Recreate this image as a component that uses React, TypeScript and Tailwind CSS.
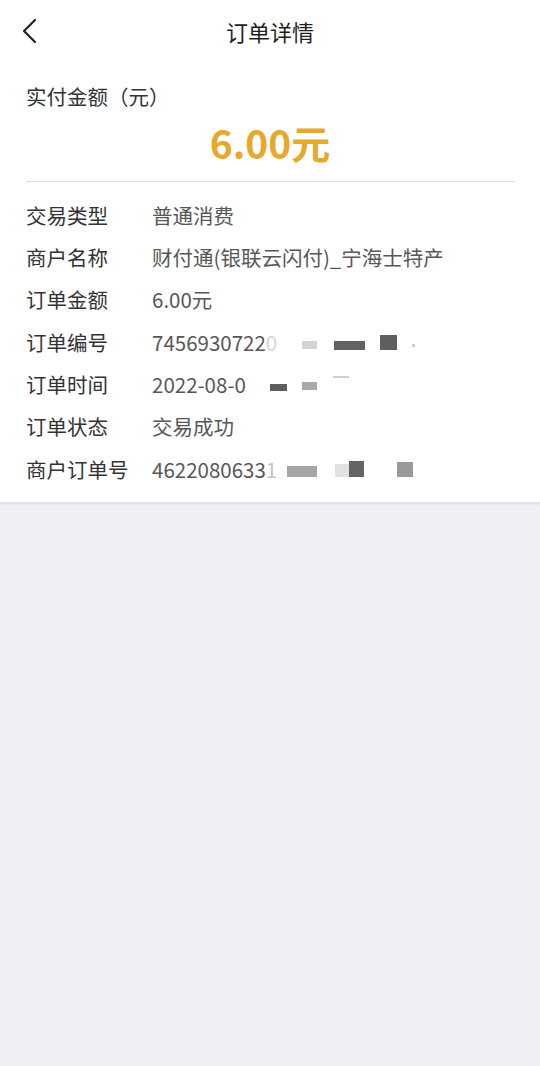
import React from "react";

const font = { fontFamily: '"Noto Sans CJK SC", "Noto Sans", sans-serif' };

function Row({ label, children }: { label: string; children: React.ReactNode }) {
  return (
    <div className="flex h-[42.33px] items-center text-[20.5px]">
      <div className="w-[126px] shrink-0 text-[#333333]">{label}</div>
      <div className="flex flex-1 items-center whitespace-nowrap text-[#575757]">{children}</div>
    </div>
  );
}

export default function App() {
  return (
    <div className="min-h-[1066px] w-[540px] bg-[#efeff4]" style={font}>
      <div className="border-b border-[#e4e4e8] bg-white shadow-[0_1px_2px_rgba(0,0,0,0.08)]">
        <div className="relative flex h-[62px] items-center justify-center">
          <svg
            className="absolute left-[20px] top-[18px]"
            width="20"
            height="26"
            viewBox="0 0 20 26"
            fill="none"
          >
            <path d="M15 2 L4 13 L15 24" stroke="#222" strokeWidth="2.2" strokeLinecap="round" strokeLinejoin="round" />
          </svg>
          <span className="text-[22px] text-[#1f1f1f]">订单详情</span>
        </div>
        <div className="px-[26px] pt-[21px]">
          <div className="text-[20.5px] leading-[26px] text-[#333333]">实付金额（元）</div>
          <div className="mt-[11px] text-center text-[39px] font-bold leading-[44px] text-[#e6a82d]">6.00元</div>
          <div className="mt-[17px] h-px w-[489px] bg-[#dcdcdc]" />
          <div className="pb-[12px] pt-[12px]">
            <Row label="交易类型">普通消费</Row>
            <Row label="商户名称">财付通(银联云闪付)_宁海士特产</Row>
            <Row label="订单金额">6.00元</Row>
            <Row label="订单编号">
              <span>7456930722</span>
              <span className="text-[#d6d6d6]">0</span>
              <span className="ml-[25px] h-[8px] w-[15px] translate-y-[3px] bg-[#d4d4d4]" />
              <span className="ml-[17px] h-[9px] w-[31px] translate-y-[3px] bg-[#626262]" />
              <span className="ml-[15px] h-[15px] w-[17px] bg-[#5e5e5e]" />
              <span className="ml-[15px] h-[3px] w-[3px] translate-y-[3px] bg-[#cfcfcf]" />
            </Row>
            <Row label="订单时间">
              <span>2022-08-0</span>
              <span className="ml-[24px] h-[7px] w-[17px] translate-y-[3px] bg-[#5e5e5e]" />
              <span className="ml-[15px] h-[8px] w-[15px] translate-y-[2px] bg-[#a8a8a8]" />
              <span className="ml-[16px] h-[2px] w-[16px] -translate-y-[7px] bg-[#d0d0d0]" />
            </Row>
            <Row label="订单状态">交易成功</Row>
            <Row label="商户订单号">
              <span>4622080633</span>
              <span className="text-[#c4c4c4]">1</span>
              <span className="ml-[10px] h-[11px] w-[30px] translate-y-[2px] bg-[#a6a6a6]" />
              <span className="ml-[18px] h-[13px] w-[14px] translate-y-[1px] bg-[#e2e2e2]" />
              <span className="h-[16px] w-[15px] bg-[#646464]" />
              <span className="ml-[33px] h-[15px] w-[16px] bg-[#9a9a9a]" />
            </Row>
          </div>
        </div>
      </div>
    </div>
  );
}
